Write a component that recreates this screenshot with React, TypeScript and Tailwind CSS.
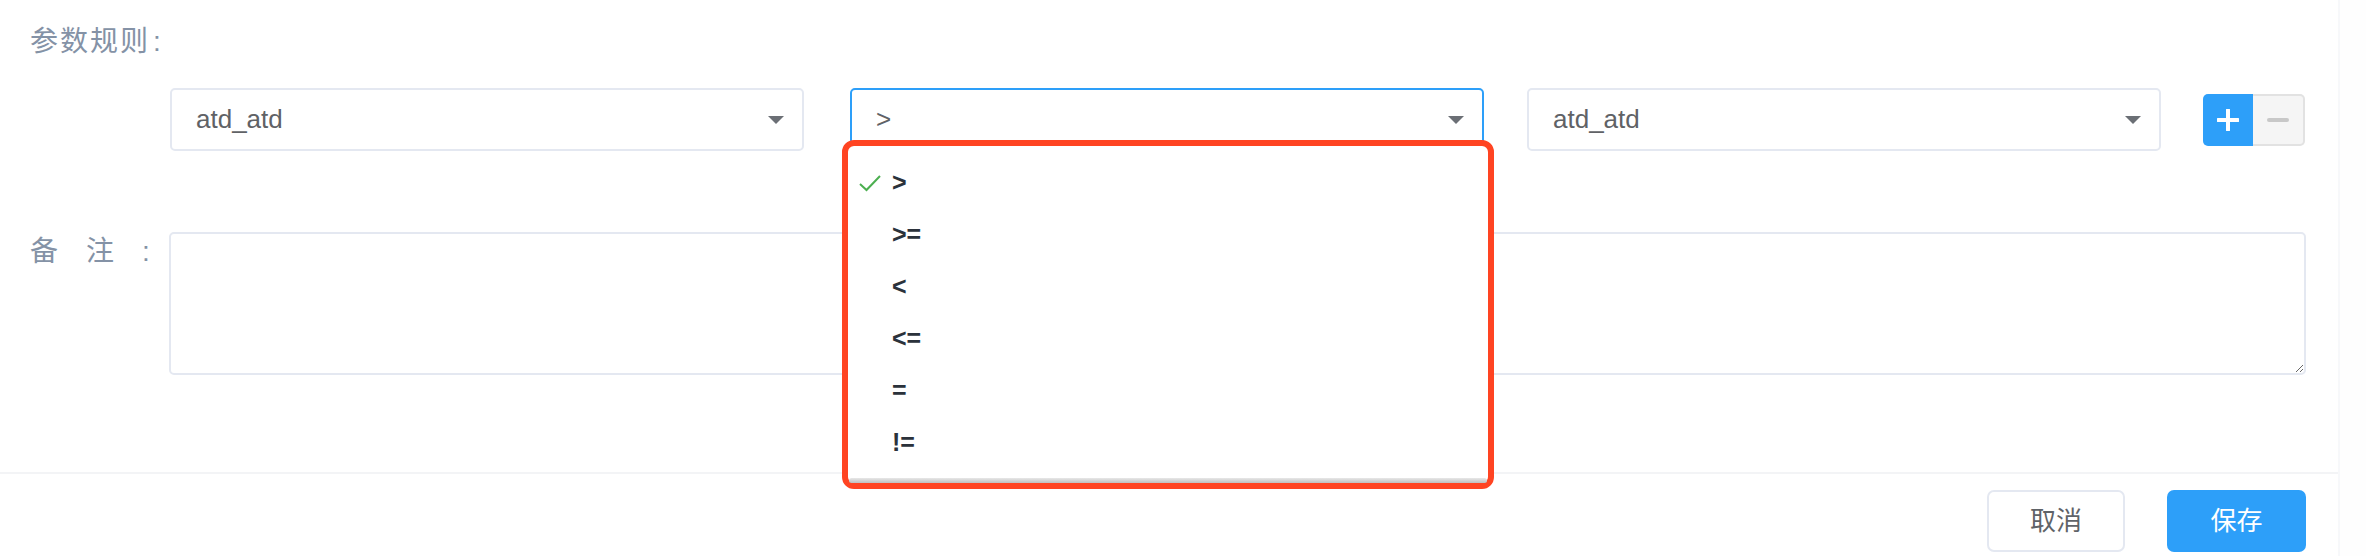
const operators = [">", ">=", "<", "<=", "=", "!="];

function Caret() {
  return (
    <svg width="16" height="8" viewBox="0 0 16 8" className="shrink-0">
      <polygon points="0,0 16,0 8,8" fill="#6b6f75" />
    </svg>
  );
}

function Select({ value, focused, children }: { value: string; focused?: boolean; children?: React.ReactNode }) {
  return (
    <div className="relative w-[634px] shrink-0">
      <div
        className={
          focused
            ? "flex h-[63px] items-center justify-between rounded-[5px] border-2 border-[#2d9ff9] bg-white pl-[24px] pr-[18px]"
            : "flex h-[63px] items-center justify-between rounded-[5px] border-2 border-[#e4e8f1] bg-white pl-[24px] pr-[18px]"
        }
      >
        <span className="text-[26px] text-[#606266]">{value}</span>
        <Caret />
      </div>
      {children}
    </div>
  );
}

function Dropdown() {
  return (
    <div className="absolute left-[-8px] top-[52px] z-10 h-[349px] w-[652px] rounded-[12px] border-[6px] border-[#ff4422] bg-white">
      <div className="flex h-full flex-col pt-[11px]">
        {operators.map((op, i) => (
          <div key={op} className="flex h-[52px] items-center">
            <span className="flex w-[44px] justify-end pr-[11px]">
              {i === 0 && (
                <svg width="22" height="17" viewBox="0 0 22 17">
                  <path d="M1 9 L7.5 15 L21 1" fill="none" stroke="#4caf50" strokeWidth="2" />
                </svg>
              )}
            </span>
            <span className="text-[25px] font-bold text-[#2b323b]">{op}</span>
          </div>
        ))}
        <div className="flex-1" />
        <div className="mx-[1px] h-[5px] rounded-full bg-gradient-to-b from-[#e8e8e8] to-[#bfbfbf]" />
      </div>
    </div>
  );
}

export default function App() {
  return (
    <div className="flex h-[556px] w-[2366px] overflow-hidden bg-white font-['Liberation_Sans','Noto_Sans_CJK_SC',sans-serif]">
      <div className="flex w-[2338px] shrink-0 flex-col">
        {/* 参数规则 */}
        <div className="pl-[30px] pt-[24px] text-[28px] leading-[36px] tracking-[2px] text-[#8492a6]">
          参数规则<span className="ml-[3px]">:</span>
        </div>

        <div className="mt-[28px] flex items-center pl-[170px]">
          <Select value="atd_atd" />
          <div className="ml-[46px]">
            <Select value=">" focused>
              <Dropdown />
            </Select>
          </div>
          <div className="ml-[43px]">
            <Select value="atd_atd" />
          </div>
          <div className="ml-[42px] flex h-[52px]">
            <button className="flex w-[50px] items-center justify-center rounded-l-[5px] bg-[#2d9ff9]">
              <svg width="22" height="22" viewBox="0 0 22 22">
                <path d="M11 1 V21 M1 11 H21" stroke="#fff" strokeWidth="4" strokeLinecap="round" />
              </svg>
            </button>
            <button className="flex w-[52px] items-center justify-center rounded-r-[5px] border-2 border-l-0 border-[#e2e2e2] bg-[#f5f5f5]">
              <svg width="22" height="6" viewBox="0 0 22 6">
                <path d="M2 3 H20" stroke="#c8c8c8" strokeWidth="4" strokeLinecap="round" />
              </svg>
            </button>
          </div>
        </div>

        {/* 备注 */}
        <div className="mt-[81px] flex items-start pl-[30px]">
          <div className="mt-[2px] flex w-[139px] text-[28px] leading-[36px] text-[#8492a6]">
            <span>备</span>
            <span className="ml-[28px]">注</span>
            <span className="ml-[28px]">:</span>
          </div>
          <textarea className="h-[143px] w-[2137px] rounded-[5px] border-2 border-[#e4e8f1] bg-white outline-none" />
        </div>

        <div className="mt-[97px] h-[2px] bg-[#f3f4f6]" />

        <div className="mt-[16px] flex justify-end gap-[42px] pr-[32px]">
          <button className="h-[62px] w-[138px] rounded-[7px] border-2 border-[#e4e8f1] bg-white text-[26px] text-[#5f6368]">
            取消
          </button>
          <button className="h-[62px] w-[139px] rounded-[7px] bg-[#2d9ff9] text-[26px] text-white">保存</button>
        </div>
      </div>
      <div className="flex-1 border-l-2 border-[#f7f8fa] bg-[#fefefe]" />
    </div>
  );
}
